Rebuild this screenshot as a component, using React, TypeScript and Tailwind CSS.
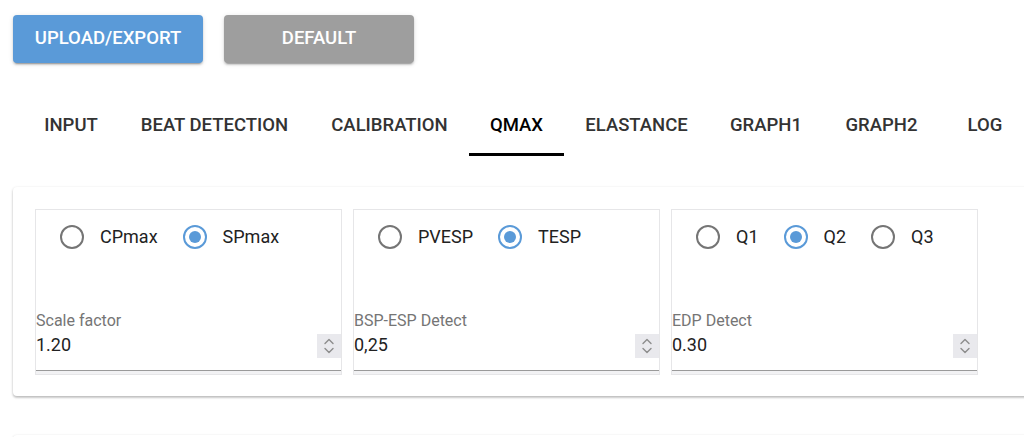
import React from 'react';

const tabs = [
  { label: 'INPUT', w: 'w-[96px]' },
  { label: 'BEAT DETECTION', w: 'w-[191px]' },
  { label: 'CALIBRATION', w: 'w-[159px]' },
  { label: 'QMAX', w: 'w-[95px]' },
  { label: 'ELASTANCE', w: 'w-[145px]' },
  { label: 'GRAPH1', w: 'w-[114px]' },
  { label: 'GRAPH2', w: 'w-[117px]' },
  { label: 'LOG', w: 'w-[90px]' },
];

const panels = [
  { options: ['CPmax', 'SPmax'], checked: 'SPmax', label: 'Scale factor', value: '1.20' },
  { options: ['PVESP', 'TESP'], checked: 'TESP', label: 'BSP-ESP Detect', value: '0,25' },
  { options: ['Q1', 'Q2', 'Q3'], checked: 'Q2', label: 'EDP Detect', value: '0.30' },
];

const Radio: React.FC<{ label: string; checked: boolean }> = ({ label, checked }) => (
  <label className="flex items-center gap-[16px] cursor-pointer">
    <span
      className={`w-[24px] h-[24px] rounded-full border-[2px] flex items-center justify-center ${
        checked ? 'border-[#5a9ad8]' : 'border-[#757575]'
      }`}
    >
      {checked && <span className="w-[12px] h-[12px] rounded-full bg-[#5a9ad8]" />}
    </span>
    <span className="text-[18px] text-[#222]">{label}</span>
  </label>
);

const Spinner = () => (
  <div className="w-[24px] h-[24px] bg-[#e9e9ed] flex items-center justify-center">
    <svg width="12" height="18" viewBox="0 0 12 18" fill="none" stroke="#8c8c8c" strokeWidth="1.4" strokeLinecap="round" strokeLinejoin="round">
      <path d="M2 6.5 L6 2.5 L10 6.5" />
      <path d="M2 11.5 L6 15.5 L10 11.5" />
    </svg>
  </div>
);

export default function App() {
  return (
    <div className="w-[1024px] h-[437px] overflow-hidden bg-white" style={{ fontFamily: 'Roboto, "Liberation Sans", sans-serif' }}>
      {/* Actions */}
      <div className="flex gap-[21px] pl-[13px] pt-[15px]">
        <button className="w-[190px] h-[48px] rounded-[4px] bg-[#5a9ad8] text-white text-[18.5px] font-medium shadow-[0_3px_1px_-2px_rgba(0,0,0,0.2),0_2px_2px_rgba(0,0,0,0.14),0_1px_5px_rgba(0,0,0,0.12)]">
          UPLOAD/EXPORT
        </button>
        <button className="w-[190px] h-[48px] rounded-[4px] bg-[#9e9e9e] text-white text-[18.5px] font-medium shadow-[0_3px_1px_-2px_rgba(0,0,0,0.2),0_2px_2px_rgba(0,0,0,0.14),0_1px_5px_rgba(0,0,0,0.12)]">
          DEFAULT
        </button>
      </div>

      {/* Tabs */}
      <div className="flex pl-[23px] mt-[33px] whitespace-nowrap">
        {tabs.map((t) => (
          <div
            key={t.label}
            className={`relative shrink-0 h-[60px] ${t.w} flex items-center justify-center text-[18.5px] font-medium ${
              t.label === 'QMAX' ? 'text-black' : 'text-[#333]'
            }`}
          >
            {t.label}
            {t.label === 'QMAX' && <span className="absolute left-0 right-0 bottom-0 h-[3px] bg-black" />}
          </div>
        ))}
      </div>

      {/* Settings card */}
      <div className="ml-[13px] mt-[31px] w-[1100px] h-[209px] bg-white rounded-[4px] shadow-[0_1px_3px_rgba(0,0,0,0.2),0_2px_2px_rgba(0,0,0,0.12)] pl-[22px] pt-[22px]">
        <div className="flex gap-[11px]">
          {panels.map((p) => (
            <div key={p.label} className="w-[307px] h-[166px] border border-[#e6e6e8] flex flex-col">
              <div className="flex items-center gap-[25px] pl-[24px] pt-[13px]">
                {p.options.map((o) => (
                  <Radio key={o} label={o} checked={o === p.checked} />
                ))}
              </div>
              <div className="mt-auto">
                <div className="text-[16px] leading-[20px] text-[#757575]">{p.label}</div>
                <div className="mt-[3px] h-[24px] flex items-center justify-between">
                  <span className="text-[18px] leading-[20px] pb-[3px] text-[#222]">{p.value}</span>
                  <Spinner />
                </div>
                <div className="mt-[12px] border-b border-[#9a9a9a]" />
                <div className="h-[3px] bg-[#f2f2f4]" />
              </div>
            </div>
          ))}
        </div>
      </div>

      {/* Next card */}
      <div className="ml-[13px] mt-[39px] w-[1100px] h-[100px] bg-white rounded-[4px] shadow-[0_1px_3px_rgba(0,0,0,0.2),0_2px_2px_rgba(0,0,0,0.12)]" />
    </div>
  );
}
